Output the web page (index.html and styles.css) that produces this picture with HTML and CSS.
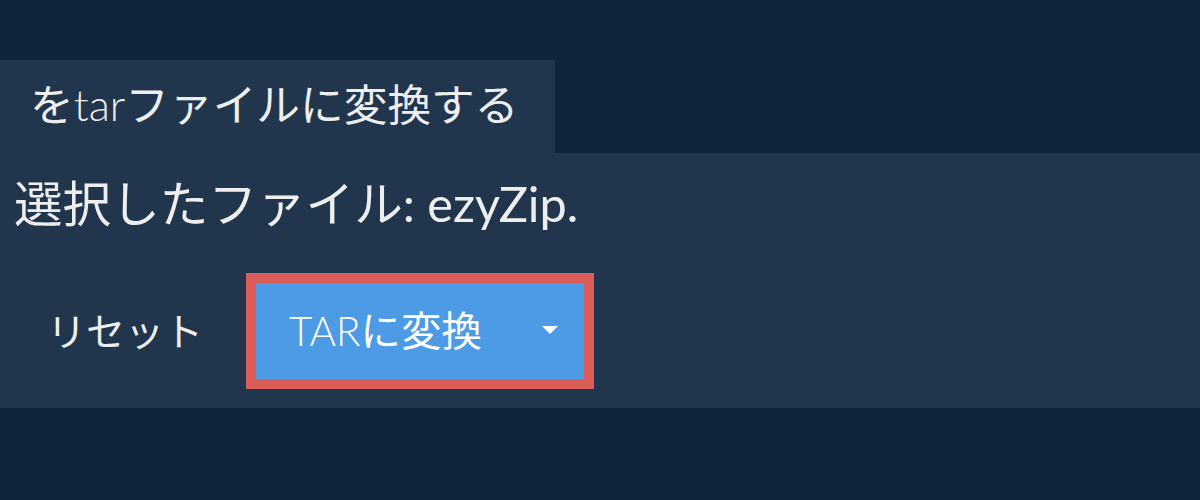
FILE: index.html
```html
<!DOCTYPE html>
<html lang="ja">
<head>
<meta charset="utf-8">
<link rel="stylesheet" href="styles.css">
</head>
<body>
<div class="spacer"></div>
<div class="tab">を<span class="light">tar</span>ファイルに変換する</div>
<div class="panel">
  <div class="title">選択したファイル: ezyZip.</div>
  <div class="actions">
    <span class="reset">リセット</span>
    <div class="convert">
      <span class="convert-label"><span class="light">TAR</span>に変換</span>
      <span class="caret"></span>
    </div>
  </div>
</div>
</body>
</html>
```
FILE: styles.css
```css
html, body {
  margin: 0;
  padding: 0;
  background: #10253a;
  font-family: "Lato", "Noto Sans CJK JP", sans-serif;
  color: #eeeeee;
}
.light {
  font-weight: 300;
}
.spacer {
  height: 60px;
}
.tab {
  width: 555px;
  height: 93px;
  box-sizing: border-box;
  background: #21364d;
  display: flex;
  align-items: center;
  padding-left: 30px;
  padding-bottom: 4px;
  font-size: 43.7px;
  line-height: 1;
  white-space: nowrap;
}
.panel {
  height: 255px;
  box-sizing: border-box;
  background: #21364d;
  padding: 20px 0 0 14px;
}
.title {
  font-size: 48.6px;
  line-height: 60px;
  white-space: nowrap;
}
.actions {
  display: flex;
  align-items: center;
  margin-top: 40px;
  padding-left: 33px;
  gap: 43px;
}
.reset {
  font-size: 39px;
  line-height: 1;
}
.convert {
  width: 348px;
  height: 116px;
  box-sizing: border-box;
  border: 10px solid #da5d5a;
  background: #4d9ae5;
  display: flex;
  align-items: center;
  padding: 0 26px 0 33px;
  color: #ffffff;
}
.convert-label {
  font-size: 40.4px;
  line-height: 1;
  flex: 1;
  white-space: nowrap;
}
.caret {
  width: 0;
  height: 0;
  border-left: 8.5px solid transparent;
  border-right: 8.5px solid transparent;
  border-top: 8px solid #ffffff;
  margin-top: -2px;
}
```
